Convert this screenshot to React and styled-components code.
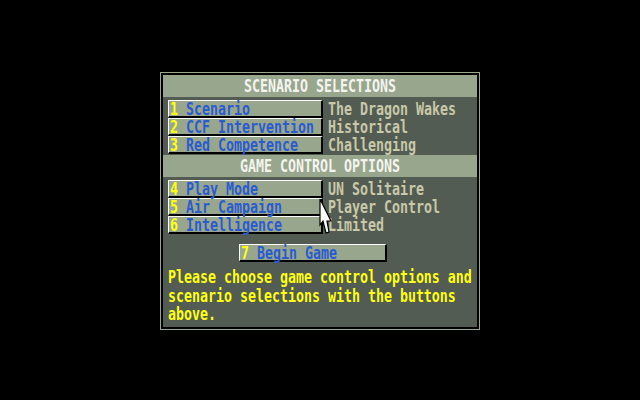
import React from 'react';
import styled, { createGlobalStyle } from 'styled-components';

const GlobalStyle = createGlobalStyle`
  html, body {
    margin: 0;
    padding: 0;
    background: #000;
  }
`;

const SAGE = '#98a68e';
const DARK = '#535c53';

const Screen = styled.div`
  position: relative;
  width: 640px;
  height: 400px;
  background: #000;
  display: flex;
  justify-content: center;
  align-items: flex-start;
  padding-top: 72px;
  box-sizing: border-box;
  font-family: "DejaVu Sans Mono", "Liberation Mono", monospace;
  font-weight: bold;
  font-size: 13.29px;
`;

const Frame = styled.div`
  width: 320px;
  border: 1px solid ${SAGE};
  padding: 2px;
  background: #000;
  box-sizing: border-box;
`;

const Panel = styled.div`
  height: 252px;
  background: ${DARK};
  display: flex;
  flex-direction: column;
`;

const Header = styled.div`
  height: 22px;
  line-height: 22px;
  background: ${SAGE};
  color: #f4f4ee;
  text-align: center;
`;

const Txt = styled.span`
  display: inline-block;
  white-space: pre;
  transform: translateY(1px) scaleY(1.32);
  color: ${(p) => p.$color || 'inherit'};
`;

const Section = styled.div`
  display: flex;
  flex-direction: column;
  padding: 3px 5px 1px 5px;
`;

const Row = styled.div`
  display: flex;
  align-items: center;
  height: 18px;
`;

const Button = styled.div`
  box-sizing: border-box;
  width: ${(p) => p.$width || 155}px;
  height: 18px;
  line-height: 15px;
  background: ${SAGE};
  border-top: 1px solid #fff;
  border-left: 1px solid #fff;
  border-right: 2px solid #000;
  border-bottom: 2px solid #000;
  padding-left: 1px;
  color: #2a5ccf;
`;

const Value = styled.div`
  margin-left: 5px;
  line-height: 18px;
  color: #c9c8a8;
`;

const BeginRow = styled.div`
  display: flex;
  padding-left: 76px;
  margin-top: 9px;
`;

const Message = styled.div`
  margin-top: 6px;
  padding-left: 5px;
  color: #ffff14;
`;

const Line = styled.div`
  height: 18.5px;
  line-height: 18.5px;
  white-space: pre;
  transform: translateY(1px) scaleY(1.32);
`;

const Pointer = styled.svg`
  position: absolute;
  left: 319px;
  top: 198px;
`;

const scenario = [
  ['1', 'Scenario', 'The Dragon Wakes'],
  ['2', 'CCF Intervention', 'Historical'],
  ['3', 'Red Competence', 'Challenging'],
];

const control = [
  ['4', 'Play Mode', 'UN Solitaire'],
  ['5', 'Air Campaign', 'Player Control'],
  ['6', 'Intelligence', 'Limited'],
];

const OptionRow = ({ num, label, value }) => (
  <Row>
    <Button>
      <Txt $color="#ffff14">{num}</Txt>
      <Txt> {label}</Txt>
    </Button>
    <Value>
      <Txt>{value}</Txt>
    </Value>
  </Row>
);

export default function App() {
  return (
    <Screen>
      <GlobalStyle />
      <Frame>
        <Panel>
          <Header>
            <Txt>SCENARIO SELECTIONS</Txt>
          </Header>
          <Section>
            {scenario.map(([n, l, v]) => (
              <OptionRow key={n} num={n} label={l} value={v} />
            ))}
          </Section>
          <Header>
            <Txt>GAME CONTROL OPTIONS</Txt>
          </Header>
          <Section>
            {control.map(([n, l, v]) => (
              <OptionRow key={n} num={n} label={l} value={v} />
            ))}
          </Section>
          <BeginRow>
            <Button $width={148}>
              <Txt $color="#ffff14">7</Txt>
              <Txt> Begin Game</Txt>
            </Button>
          </BeginRow>
          <Message>
            <Line>Please choose game control options and</Line>
            <Line>scenario selections with the buttons</Line>
            <Line>above.</Line>
          </Message>
        </Panel>
      </Frame>
      <Pointer width="14" height="38" viewBox="0 0 14 38">
        <polygon
          points="1,1 1,27 4,23 7,35 10,34 8,23 12,23"
          fill="#fff"
          stroke="#000"
          strokeWidth="1.2"
          strokeLinejoin="miter"
        />
      </Pointer>
    </Screen>
  );
}
